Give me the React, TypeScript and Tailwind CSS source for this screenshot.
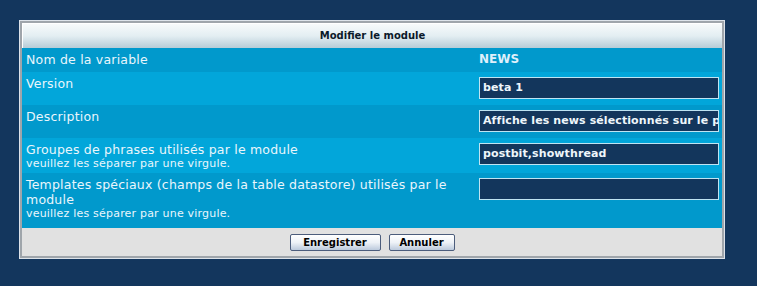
const font = "font-['DejaVu_Sans',Verdana,sans-serif]";

function Field({ value }: { value: string }) {
  return (
    <div className="h-[22px] w-[240px] overflow-hidden whitespace-nowrap border border-[#bfe4f2] bg-[#13365c] px-[3px] text-[11px] leading-[20px] font-bold tracking-[0.1px] text-[#eef6fb]">
      {value}
    </div>
  );
}

function Row({
  dark,
  height,
  label,
  note,
  children,
}: {
  dark?: boolean;
  height: string;
  label: string;
  note?: string;
  children: React.ReactNode;
}) {
  return (
    <div className={`flex ${height} ${dark ? "bg-[#0199cc]" : "bg-[#02a6da]"}`}>
      <div className="w-[453px] pl-[4px] pr-[8px] pt-[4px] text-[#eaf6fc]">
        <div className="text-[12.5px] leading-[15px] tracking-[0.2px]">{label}</div>
        {note && <div className="text-[11px] leading-[13px] tracking-[0.2px]">{note}</div>}
      </div>
      <div className="pt-[5px] pl-[4px]">{children}</div>
    </div>
  );
}

function Button({ label, width }: { label: string; width: string }) {
  return (
    <button
      className={`h-[17px] ${width} rounded-[2px] border border-[#4c5d7c] bg-gradient-to-b from-white via-[#eef2f7] to-[#bccadc] text-[10px] leading-[15px] font-bold text-black`}
    >
      {label}
    </button>
  );
}

export default function App() {
  return (
    <div className={`h-[286px] w-[757px] bg-[#13365d] pt-[20px] pl-[19px] ${font}`}>
      <div className="w-[706px] border border-[#dde3ea]">
        <div className="border-2 border-[#9fa5ab]">
          <div className="h-[25px] border-t border-l border-white bg-gradient-to-b from-[#f7fafb] via-[#e3eef2] to-[#b7ccd7] text-center text-[10px] leading-[23px] font-bold text-[#0b1a2a]">
            Modifier le module
          </div>
          <div className="flex h-[24px] bg-[#0199cc]">
            <div className="w-[453px] pl-[4px] pt-[4px] text-[12.5px] leading-[15px] tracking-[0.2px] text-[#eaf6fc]">
              Nom de la variable
            </div>
            <div className="pt-[4px] pl-[4px] text-[12px] leading-[15px] font-bold text-[#dff0fb]">NEWS</div>
          </div>
          <Row height="h-[33px]" label="Version">
            <Field value="beta 1" />
          </Row>
          <Row dark height="h-[33px]" label="Description">
            <Field value="Affiche les news sélectionnés sur le portail" />
          </Row>
          <Row height="h-[35px]" label="Groupes de phrases utilisés par le module" note="veuillez les séparer par une virgule.">
            <Field value="postbit,showthread" />
          </Row>
          <Row
            dark
            height="h-[55px]"
            label="Templates spéciaux (champs de la table datastore) utilisés par le module"
            note="veuillez les séparer par une virgule."
          >
            <Field value="" />
          </Row>
          <div className="flex h-[28px] items-start justify-center gap-[8px] bg-[#e1e1e1] pt-[6px]">
            <Button label="Enregistrer" width="w-[91px]" />
            <Button label="Annuler" width="w-[66px]" />
          </div>
        </div>
      </div>
    </div>
  );
}
